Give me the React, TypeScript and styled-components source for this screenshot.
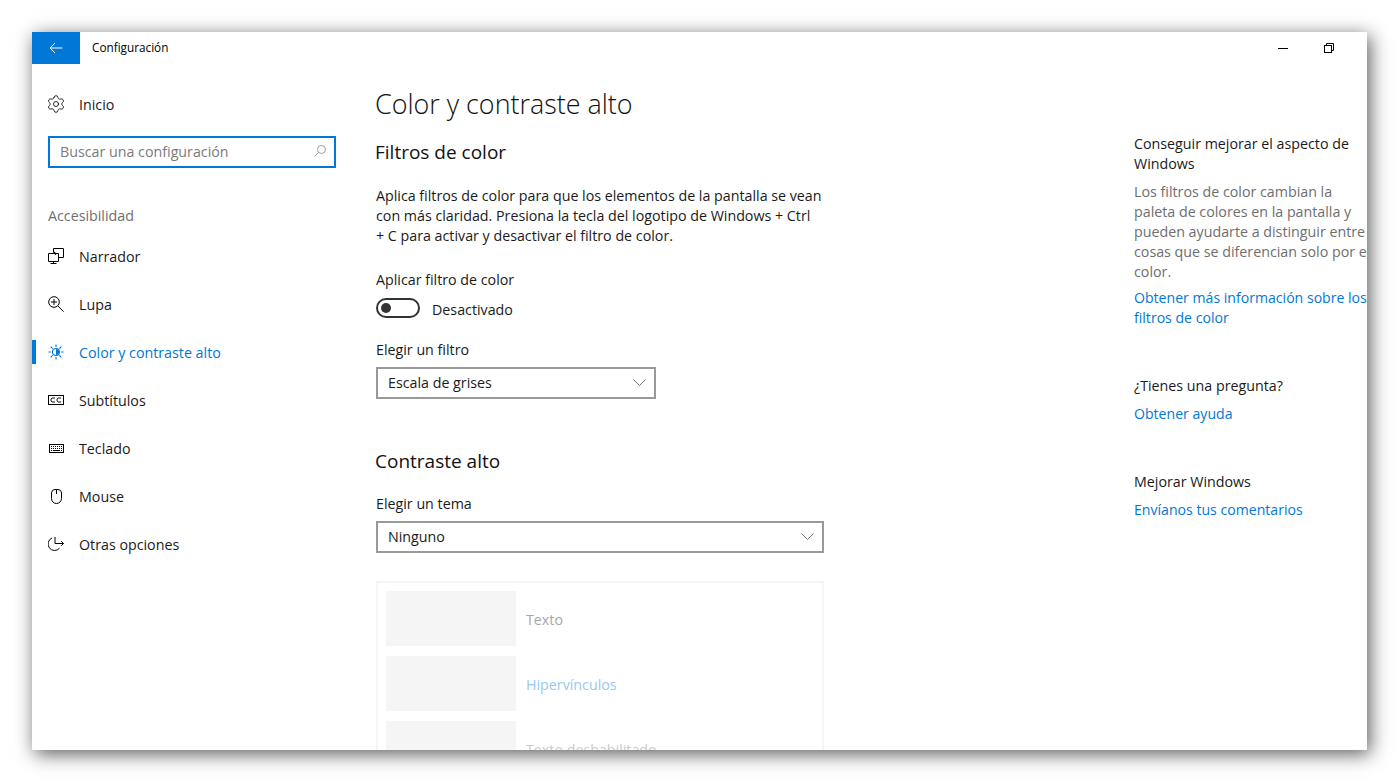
import React from 'react';
import styled, { createGlobalStyle } from 'styled-components';
import { Settings } from 'lucide-react';

const GlobalStyle = createGlobalStyle`
  html, body {
    margin: 0;
    padding: 0;
    background: #ffffff;
    overflow: hidden;
  }
  * {
    box-sizing: border-box;
  }
`;

const Page = styled.div`
  width: 1399px;
  height: 782px;
  padding: 32px;
  font-family: 'Open Sans', 'Liberation Sans', sans-serif;
  font-size: 14.25px;
  color: #1a1a1a;
`;

const Window = styled.div`
  width: 1335px;
  height: 718px;
  background: #ffffff;
  overflow: hidden;
  box-shadow: 3px 4px 18px rgba(0, 0, 0, 0.65);
  display: flex;
  flex-direction: column;
`;

const TitleBar = styled.div`
  height: 32px;
  display: flex;
  align-items: center;
  flex-shrink: 0;
`;

const BackButton = styled.div`
  width: 48px;
  height: 32px;
  background: #0078d7;
  display: flex;
  align-items: center;
  justify-content: center;
`;

const AppTitle = styled.div`
  margin: 0 0 2px 12px;
  font-size: 11.75px;
  color: #000;
  flex: 1;
`;

const WinControls = styled.div`
  display: flex;
  align-items: center;
  padding-right: 33px;
  gap: 36px;
`;

const Body = styled.div`
  flex: 1;
  display: flex;
  min-height: 0;
`;

const Sidebar = styled.div`
  width: 343px;
  flex-shrink: 0;
  padding-top: 16px;
`;

const NavRow = styled.div<{ $active?: boolean }>`
  position: relative;
  height: 48px;
  padding-left: 16px;
  display: flex;
  align-items: center;
  gap: 15px;
  color: ${(p) => (p.$active ? '#0078d7' : '#1a1a1a')};

  ${(p) =>
    p.$active &&
    `&::before {
      content: '';
      position: absolute;
      left: 0;
      top: 12px;
      width: 4px;
      height: 24px;
      background: #0078d7;
    }`}
`;

const IconBox = styled.span`
  width: 16px;
  height: 16px;
  display: flex;
  align-items: center;
  justify-content: center;
  flex-shrink: 0;

  svg {
    flex-shrink: 0;
  }
`;

const SearchBox = styled.div`
  margin: 8px 0 0 16px;
  width: 288px;
  height: 32px;
  border: 2px solid #0078d7;
  padding: 0 8px 2px 10px;
  display: flex;
  align-items: center;
  justify-content: space-between;
  color: #7a7a7a;
`;

const GroupLabel = styled.div`
  margin: 38px 0 6px 16px;
  height: 20px;
  line-height: 20px;
  color: #6e6e6e;
`;

const Main = styled.div`
  width: 759px;
  flex-shrink: 0;
  padding-top: 22px;
`;

const PageTitle = styled.h1`
  margin: 0;
  font-size: 26.9px;
  font-weight: 300;
  line-height: 36px;
  color: #111;
`;

const SectionTitle = styled.h2<{ $top: number }>`
  margin: ${(p) => p.$top}px 0 0;
  font-size: 19px;
  font-weight: 400;
  line-height: 28px;
  color: #111;
`;

const Content = styled.div`
  padding-left: 1px;
`;

const Paragraph = styled.p`
  margin: 20px 0 0;
  line-height: 20px;
  white-space: nowrap;
`;

const FieldLabel = styled.div<{ $top: number }>`
  margin-top: ${(p) => p.$top}px;
  line-height: 20px;
`;

const ToggleRow = styled.div`
  margin-top: 9px;
  height: 20px;
  display: flex;
  align-items: center;
  gap: 12px;
`;

const Toggle = styled.div`
  position: relative;
  width: 44px;
  height: 20px;
  margin-bottom: 2px;
  border: 2px solid #333;
  border-radius: 10px;

  &::after {
    content: '';
    position: absolute;
    left: 3px;
    top: 3px;
    width: 10px;
    height: 10px;
    border-radius: 50%;
    background: #333;
  }
`;

const Select = styled.div<{ $width: number }>`
  margin-top: 7px;
  width: ${(p) => p.$width}px;
  height: 32px;
  border: 2px solid #999;
  padding: 0 8px 2px 10px;
  display: flex;
  align-items: center;
  justify-content: space-between;
`;

const Preview = styled.div`
  margin-top: 28px;
  width: 448px;
  height: 300px;
  border: 2px solid #f5f5f5;
  padding: 8px;
  display: flex;
  flex-direction: column;
  gap: 10px;
`;

const PreviewRow = styled.div`
  display: flex;
  gap: 10px;
  height: 55px;
  flex-shrink: 0;
`;

const Swatch = styled.div`
  width: 130px;
  height: 55px;
  background: #f5f5f5;
`;

const PreviewLabel = styled.div<{ $color: string }>`
  align-self: center;
  margin-top: 2px;
  color: ${(p) => p.$color};
`;

const Aside = styled.div`
  flex-shrink: 0;
  width: 250px;
  padding-top: 32px;
  white-space: nowrap;
  line-height: 20px;
`;

const AsideGroup = styled.div<{ $top: number }>`
  margin-top: ${(p) => p.$top}px;
`;

const AsideTitle = styled.div`
  color: #1a1a1a;
`;

const AsideText = styled.div`
  margin-top: 8px;
  color: #6e6e6e;
`;

const AsideLink = styled.div<{ $top: number }>`
  margin-top: ${(p) => p.$top}px;
  font-size: 14.1px;
  color: #0078d7;
`;

const Chevron = () => (
  <svg width="13" height="7" viewBox="0 0 13 7" fill="none" stroke="#777" strokeWidth="1">
    <path d="M0.4 0.5 L6.5 6.5 L12.6 0.5" />
  </svg>
);

const ink = '#000';

const NarratorIcon = () => (
  <svg width="16" height="16" viewBox="0 0 16 16" fill="none" stroke={ink} strokeWidth="1">
    <path d="M5.5 4.5 V0.5 H15.5 V9.5 H10.5" />
    <path d="M0.5 5.5 H10.5 V13.5 H0.5 Z" />
    <path d="M5.5 13.5 V15.5 M2.5 15.5 H8.5" />
    <path d="M6 4 L8 6.5" strokeWidth="1.4" />
  </svg>
);

const LupaIcon = () => (
  <svg width="16" height="16" viewBox="0 0 16 16" fill="none" stroke={ink} strokeWidth="1">
    <circle cx="6" cy="6" r="5.3" />
    <path d="M6 3 V9 M3 6 H9" />
    <path d="M10 10 L15.6 15.6" />
  </svg>
);

const SunIcon = () => (
  <svg width="16" height="16" viewBox="0 0 16 16" fill="none" stroke="#0078d7" strokeWidth="1.1">
    <circle cx="8" cy="8" r="3.5" />
    <path d="M8 5 a3 3 0 0 1 0 6 Z" fill="#0078d7" stroke="none" />
    <path d="M8 0.5 V3 M8 13 V15.5 M0.5 8 H3 M13 8 H15.5 M2.7 2.7 L4.6 4.6 M11.4 11.4 L13.3 13.3 M13.3 2.7 L11.4 4.6 M4.6 11.4 L2.7 13.3" />
  </svg>
);

const CcIcon = () => (
  <svg width="16" height="10" viewBox="0 0 16 10" fill="none" stroke={ink} strokeWidth="1">
    <rect x="0.5" y="0.5" width="15" height="9" />
    <path d="M7 3 H4.3 L3 4.2 V5.8 L4.3 7 H7 M13 3 H10.3 L9 4.2 V5.8 L10.3 7 H13" />
  </svg>
);

const KeyboardIcon = () => (
  <svg width="15" height="9" viewBox="0 0 15 9" fill="none" stroke={ink} strokeWidth="1">
    <rect x="0.5" y="0.5" width="14" height="8" />
    <path d="M2 2.5 H13 M2 4.5 H13" strokeDasharray="1 1" />
    <path d="M4 6.5 H11 M2 6.5 H3 M12 6.5 H13" />
  </svg>
);

const MouseIcon = () => (
  <svg width="11" height="15" viewBox="0 0 11 15" fill="none" stroke={ink} strokeWidth="1">
    <path d="M0.5 4 A3.5 3.5 0 0 1 4 0.5 H7 A3.5 3.5 0 0 1 10.5 4 V9.5 A5 5 0 0 1 0.5 9.5 Z" />
    <path d="M5.5 0.5 V5" />
  </svg>
);

const OtherIcon = () => (
  <svg width="16" height="15" viewBox="0 0 16 15" fill="none" stroke={ink} strokeWidth="1">
    <path d="M4 1 A6.5 6.5 0 1 0 11.5 11.2" />
    <path d="M7 0 V6.5 H15.5 M13.2 4.2 L15.5 6.5 L13.2 8.8" />
  </svg>
);

const navItems = [
  { label: 'Narrador', icon: <NarratorIcon /> },
  { label: 'Lupa', icon: <LupaIcon /> },
  { label: 'Color y contraste alto', icon: <SunIcon />, active: true },
  { label: 'Subtítulos', icon: <CcIcon /> },
  { label: 'Teclado', icon: <KeyboardIcon /> },
  { label: 'Mouse', icon: <MouseIcon /> },
  { label: 'Otras opciones', icon: <OtherIcon /> },
];

const App: React.FC = () => {
  return (
    <Page>
      <GlobalStyle />
      <Window>
        <TitleBar>
          <BackButton>
            <svg width="14" height="12" viewBox="0 0 14 12" fill="none" stroke="#fff" strokeWidth="1">
              <path d="M13.5 6 H1 M6 1 L1 6 L6 11" />
            </svg>
          </BackButton>
          <AppTitle>Configuración</AppTitle>
          <WinControls>
            <svg width="10" height="1" viewBox="0 0 10 1">
              <rect width="10" height="1" fill="#000" />
            </svg>
            <svg width="10" height="10" viewBox="0 0 10 10" fill="none" stroke="#000" strokeWidth="1">
              <rect x="0.5" y="2.5" width="7" height="7" />
              <path d="M2.5 2.5 V0.5 H9.5 V7.5 H7.5" />
            </svg>
          </WinControls>
        </TitleBar>
        <Body>
          <Sidebar>
            <NavRow>
              <IconBox>
                <Settings size={20} strokeWidth={1} color={ink} />
              </IconBox>
              Inicio
            </NavRow>
            <SearchBox>
              Buscar una configuración
              <svg width="12" height="12" viewBox="0 0 12 12" fill="none" stroke="#9a9a9a" strokeWidth="1">
                <circle cx="7.5" cy="4.5" r="4" />
                <path d="M4.6 7.4 L0.6 11.4" />
              </svg>
            </SearchBox>
            <GroupLabel>Accesibilidad</GroupLabel>
            {navItems.map((item) => (
              <NavRow key={item.label} $active={item.active}>
                <IconBox>{item.icon}</IconBox>
                {item.label}
              </NavRow>
            ))}
          </Sidebar>
          <Main>
            <PageTitle>Color y contraste alto</PageTitle>
            <SectionTitle $top={16}>Filtros de color</SectionTitle>
            <Content>
              <Paragraph>
                Aplica filtros de color para que los elementos de la pantalla se vean
                <br />
                con más claridad. Presiona la tecla del logotipo de Windows + Ctrl
                <br />
                + C para activar y desactivar el filtro de color.
              </Paragraph>
              <FieldLabel $top={24}>Aplicar filtro de color</FieldLabel>
              <ToggleRow>
                <Toggle />
                Desactivado
              </ToggleRow>
              <FieldLabel $top={21}>Elegir un filtro</FieldLabel>
              <Select $width={280}>
                Escala de grises
                <Chevron />
              </Select>
            </Content>
            <SectionTitle $top={48}>Contraste alto</SectionTitle>
            <Content>
              <FieldLabel $top={19}>Elegir un tema</FieldLabel>
              <Select $width={448}>
                Ninguno
                <Chevron />
              </Select>
              <Preview>
                <PreviewRow>
                  <Swatch />
                  <PreviewLabel $color="#a6a6a6">Texto</PreviewLabel>
                </PreviewRow>
                <PreviewRow>
                  <Swatch />
                  <PreviewLabel $color="#99c9ef">Hipervínculos</PreviewLabel>
                </PreviewRow>
                <PreviewRow>
                  <Swatch />
                  <PreviewLabel $color="#cccccc">Texto deshabilitado</PreviewLabel>
                </PreviewRow>
              </Preview>
            </Content>
          </Main>
          <Aside>
            <AsideGroup $top={38}>
              <AsideTitle>
                Conseguir mejorar el aspecto de
                <br />
                Windows
              </AsideTitle>
              <AsideText>
                Los filtros de color cambian la
                <br />
                paleta de colores en la pantalla y
                <br />
                pueden ayudarte a distinguir entre
                <br />
                cosas que se diferencian solo por el
                <br />
                color.
              </AsideText>
              <AsideLink $top={6}>
                Obtener más información sobre los
                <br />
                filtros de color
              </AsideLink>
            </AsideGroup>
            <AsideGroup $top={48}>
              <AsideTitle>¿Tienes una pregunta?</AsideTitle>
              <AsideLink $top={8}>Obtener ayuda</AsideLink>
            </AsideGroup>
            <AsideGroup $top={48}>
              <AsideTitle>Mejorar Windows</AsideTitle>
              <AsideLink $top={8}>Envíanos tus comentarios</AsideLink>
            </AsideGroup>
          </Aside>
        </Body>
      </Window>
    </Page>
  );
};

export default App;
